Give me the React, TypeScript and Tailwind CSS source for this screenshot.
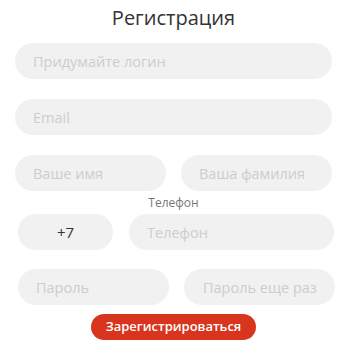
import React from "react";

const field =
  "h-[36px] rounded-full bg-[#f1f1f1] px-[18px] text-[14.5px] text-[#333] placeholder:text-[#cdcdcd] outline-none";

export default function App() {
  return (
    <div
      className="w-[347px] h-[349px] bg-white flex flex-col"
      style={{ fontFamily: '"Open Sans", "Noto Sans", sans-serif' }}
    >
      <h1 className="pt-[4px] text-center text-[20px] leading-[28px] text-[#333]">
        Регистрация
      </h1>

      <div className="mt-[11px] px-[15px]">
        <input className={`${field} w-full`} placeholder="Придумайте логин" />
      </div>

      <div className="mt-[20px] px-[15px]">
        <input className={`${field} w-full`} placeholder="Email" />
      </div>

      <div className="mt-[20px] flex gap-[15px] px-[15px]">
        <input className={`${field} w-[151px]`} placeholder="Ваше имя" />
        <input className={`${field} w-[151px]`} placeholder="Ваша фамилия" />
      </div>

      <div className="h-[23px] flex items-center justify-center pt-[1px] text-[12px] text-[#777]">
        Телефон
      </div>

      <div className="flex gap-[16px] pl-[18px]">
        <div className="h-[36px] w-[95px] rounded-full bg-[#f1f1f1] flex items-center justify-center text-[15px] text-[#333]">
          +7
        </div>
        <input className={`${field} w-[205px]`} placeholder="Телефон" />
      </div>

      <div className="mt-[19px] flex gap-[15px] pl-[18px]">
        <input
          type="password"
          className={`${field} w-[151px]`}
          placeholder="Пароль"
        />
        <input
          type="password"
          className={`${field} w-[151px] pl-[19px] pr-[4px]`}
          placeholder="Пароль еще раз"
        />
      </div>

      <div className="mt-[9px] flex justify-center">
        <button className="h-[26px] w-[165px] rounded-full bg-[#d9341d] text-[13px] font-semibold text-white">
          Зарегистрироваться
        </button>
      </div>
    </div>
  );
}
